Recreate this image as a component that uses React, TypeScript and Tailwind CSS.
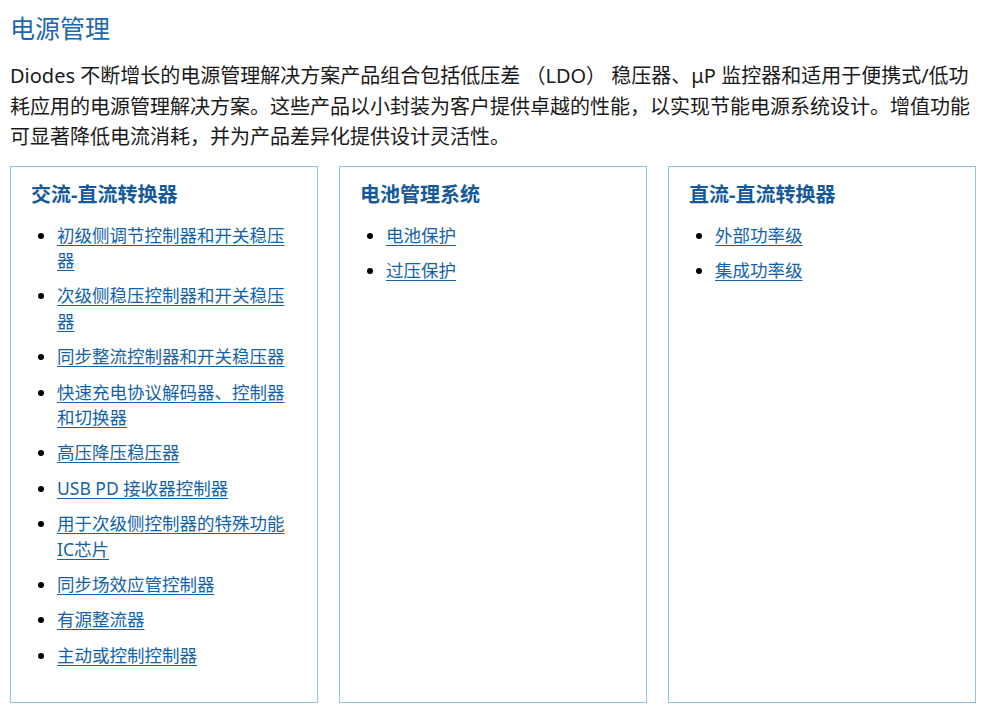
import React from "react";

const font = { fontFamily: '"Noto Sans", "Noto Sans CJK SC", sans-serif' };

const cols: { title: string; items: string[] }[] = [
  {
    title: "交流-直流转换器",
    items: [
      "初级侧调节控制器和开关稳压器",
      "次级侧稳压控制器和开关稳压器",
      "同步整流控制器和开关稳压器",
      "快速充电协议解码器、控制器和切换器",
      "高压降压稳压器",
      "USB PD 接收器控制器",
      "用于次级侧控制器的特殊功能IC芯片",
      "同步场效应管控制器",
      "有源整流器",
      "主动或控制控制器",
    ],
  },
  { title: "电池管理系统", items: ["电池保护", "过压保护"] },
  { title: "直流-直流转换器", items: ["外部功率级", "集成功率级"] },
];

export default function App() {
  return (
    <div className="w-[1006px] h-[717px] bg-white overflow-hidden font-['Noto_Sans','Noto_Sans_CJK_SC',sans-serif]">
      <div className="pl-[10px] w-[976px]">
        <h1 className="pt-[10px] text-[25px] leading-[36px] text-[#1b68b0] font-normal">电源管理</h1>
        <p className="mt-[15px] text-[20px] leading-[30.5px] text-[#1a1a1a]">
          Diodes 不断增长的电源管理解决方案产品组合包括低压差 （LDO） 稳压器、μP 监控器和适用于便携式/低功耗应用的电源管理解决方案。这些产品以小封装为客户提供卓越的性能，以实现节能电源系统设计。增值功能可显著降低电流消耗，并为产品差异化提供设计灵活性。
        </p>
        <div className="mt-[13px] grid grid-cols-3 gap-[21px] w-[966px]">
          {cols.map((c) => (
            <div key={c.title} className="h-[537px] border border-[#8cc3ee] pl-[20px] pr-[20px] pt-[14px]">
              <h2 className="text-[20px] leading-[28px] font-bold text-[#15599b]">{c.title}</h2>
              <ul className="mt-[14px] list-disc pl-[26px] text-[17.5px] leading-[25.4px]">
                {c.items.map((it) => (
                  <li key={it} className="mb-[10px] marker:text-black">
                    <a href="#" className="text-[#1462a9] underline underline-offset-[3px]" style={font}>
                      {it}
                    </a>
                  </li>
                ))}
              </ul>
            </div>
          ))}
        </div>
      </div>
    </div>
  );
}
